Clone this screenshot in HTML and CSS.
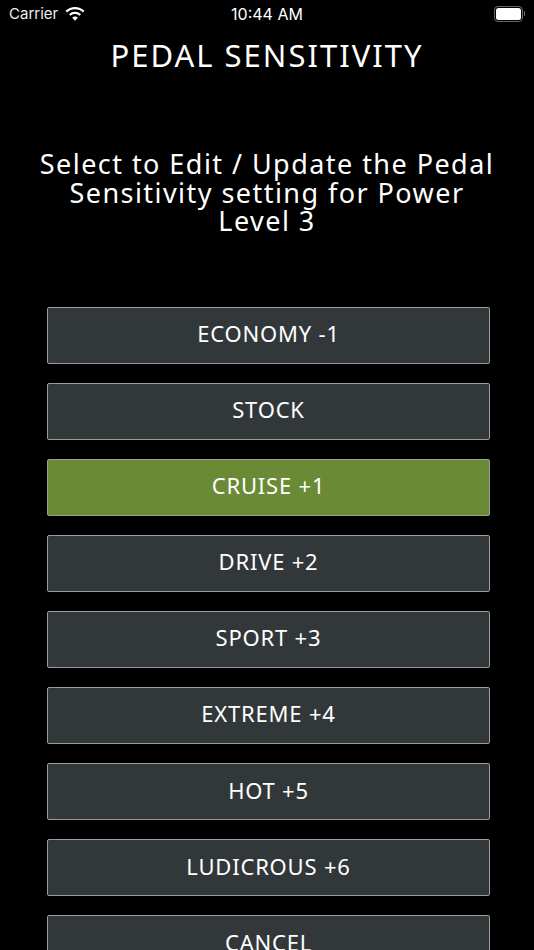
FILE: index.html
```html
<!DOCTYPE html>
<html lang="en">
<head>
    <meta charset="UTF-8">
    <meta name="viewport" content="width=device-width, initial-scale=1.0">
    <title>Pedal Sensitivity</title>
    <link rel="stylesheet" href="styles.css">
</head>
<body>
    <div class="screen">
        <div class="status-bar">
            <div class="status-left">
                <span>Carrier</span>
                <svg class="wifi" viewBox="0 0 18 13" width="22" height="16">
                    <path d="M9 2.6c2.5 0 4.8 1 6.5 2.6l1.2-1.3A11.2 11.2 0 0 0 9 .8 11.2 11.2 0 0 0 1.300 3.900l1.200 1.300A9.400 9.400 0 0 1 9 2.600z" fill="#fff"/>
                    <path d="M9 6.500c1.400 0 2.700.5 3.700 1.500l1.200-1.300A7 7 0 0 0 9 4.700a7 7 0 0 0-4.900 2l1.200 1.300c1-1 2.300-1.500 3.700-1.500z" fill="#fff"/>
                    <path d="M9 8.600c-.9 0-1.700.4-2.300.9L9 12l2.300-2.500c-.6-.5-1.400-.9-2.300-.9z" fill="#fff"/>
                </svg>
            </div>
            <div class="status-time">10:44 AM</div>
            <div class="status-right">
                <div class="battery"><div class="battery-level"></div></div>
                <div class="battery-cap"></div>
            </div>
        </div>

        <h1 class="title">PEDAL SENSITIVITY</h1>
        <p class="prompt">Select to Edit / Update the Pedal Sensitivity setting for Power Level 3</p>

        <div class="options">
            <button class="option">ECONOMY -1</button>
            <button class="option">STOCK</button>
            <button class="option selected">CRUISE +1</button>
            <button class="option">DRIVE +2</button>
            <button class="option">SPORT +3</button>
            <button class="option">EXTREME +4</button>
            <button class="option">HOT +5</button>
            <button class="option">LUDICROUS +6</button>
            <button class="option">CANCEL</button>
        </div>
    </div>
</body>
</html>
```

FILE: styles.css
```css
html, body {
    margin: 0;
    height: 950px;
    overflow: hidden;
    background: #000;
}

.screen {
    height: 950px;
    overflow: hidden;
    color: #fff;
    font-family: "Noto Sans", sans-serif;
}

.status-bar {
    display: grid;
    grid-template-columns: 1fr auto 1fr;
    align-items: center;
    height: 27px;
    padding: 0 9px 0 9px;
    font-family: Inter, sans-serif;
    font-size: 15px;
}

.status-time {
    font-size: 16px;
}

.status-left {
    display: flex;
    align-items: center;
    gap: 6px;
    color: #eee;
}

.status-right {
    display: flex;
    align-items: center;
    justify-content: flex-end;
    gap: 1px;
}

.battery {
    width: 25px;
    height: 12px;
    padding: 1px;
    box-sizing: content-box;
    border: 1px solid #666;
    border-radius: 4px;
}

.battery-level {
    height: 100%;
    background: #fff;
    border-radius: 2.5px;
}

.battery-cap {
    width: 1px;
    height: 5px;
    background: #666;
}

.title {
    margin: 9px 0 0;
    font-size: 31px;
    font-weight: 400;
    line-height: 38px;
    letter-spacing: 2px;
    text-align: center;
}

.prompt {
    width: 466px;
    margin: 76px auto 0;
    font-size: 27px;
    line-height: 28.500px;
    letter-spacing: 1.45px;
    text-align: center;
}

.options {
    display: flex;
    flex-direction: column;
    gap: 19.100px;
    margin: 71px 44px 0 47px;
}

.option {
    flex: none;
    height: 57px;
    padding: 0 0 4px;
    background: #32383a;
    border: 1px solid #999c9b;
    border-radius: 2px;
    color: #fff;
    font-family: inherit;
    font-size: 22px;
    letter-spacing: 0.8px;
}

.selected {
    background: #6b8a36;
}
```
